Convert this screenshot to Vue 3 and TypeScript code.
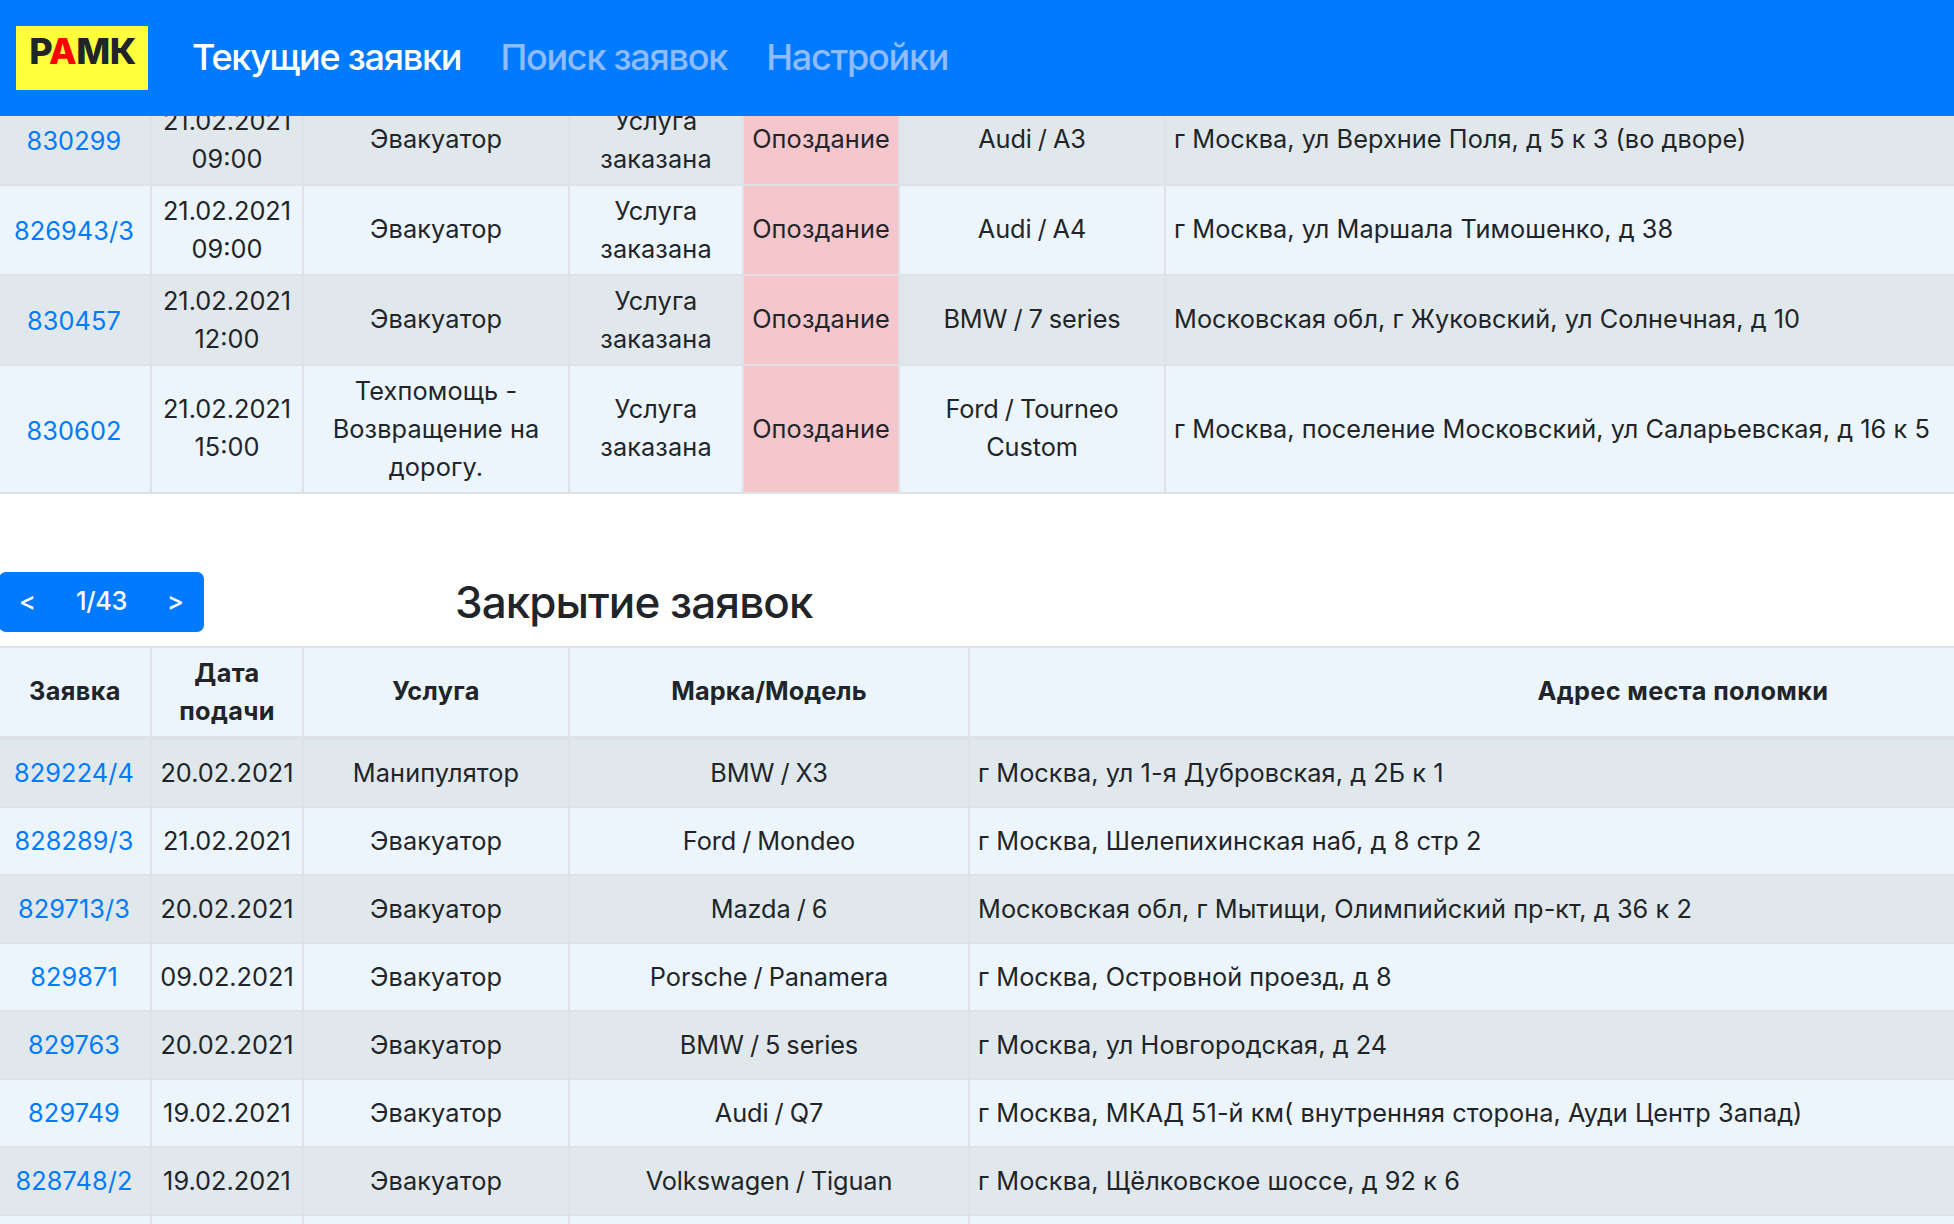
<script setup lang="ts">
interface ActiveRequest {
  id: string
  date: string
  time: string
  service: string[]
  car: string[]
  address: string
}

interface ClosingRequest {
  id: string
  date: string
  service: string
  car: string
  address: string
}

const activeRequests: ActiveRequest[] = [
  { id: '830299', date: '21.02.2021', time: '09:00', service: ['Эвакуатор'], car: ['Audi / A3'], address: 'г Москва, ул Верхние Поля, д 5 к 3 (во дворе)' },
  { id: '826943/3', date: '21.02.2021', time: '09:00', service: ['Эвакуатор'], car: ['Audi / A4'], address: 'г Москва, ул Маршала Тимошенко, д 38' },
  { id: '830457', date: '21.02.2021', time: '12:00', service: ['Эвакуатор'], car: ['BMW / 7 series'], address: 'Московская обл, г Жуковский, ул Солнечная, д 10' },
  { id: '830602', date: '21.02.2021', time: '15:00', service: ['Техпомощь -', 'Возвращение на', 'дорогу.'], car: ['Ford / Tourneo', 'Custom'], address: 'г Москва, поселение Московский, ул Саларьевская, д 16 к 5' },
]

const closingRequests: ClosingRequest[] = [
  { id: '829224/4', date: '20.02.2021', service: 'Манипулятор', car: 'BMW / X3', address: 'г Москва, ул 1-я Дубровская, д 2Б к 1' },
  { id: '828289/3', date: '21.02.2021', service: 'Эвакуатор', car: 'Ford / Mondeo', address: 'г Москва, Шелепихинская наб, д 8 стр 2' },
  { id: '829713/3', date: '20.02.2021', service: 'Эвакуатор', car: 'Mazda / 6', address: 'Московская обл, г Мытищи, Олимпийский пр-кт, д 36 к 2' },
  { id: '829871', date: '09.02.2021', service: 'Эвакуатор', car: 'Porsche / Panamera', address: 'г Москва, Островной проезд, д 8' },
  { id: '829763', date: '20.02.2021', service: 'Эвакуатор', car: 'BMW / 5 series', address: 'г Москва, ул Новгородская, д 24' },
  { id: '829749', date: '19.02.2021', service: 'Эвакуатор', car: 'Audi / Q7', address: 'г Москва, МКАД 51-й км( внутренняя сторона, Ауди Центр Запад)' },
  { id: '828748/2', date: '19.02.2021', service: 'Эвакуатор', car: 'Volkswagen / Tiguan', address: 'г Москва, Щёлковское шоссе, д 92 к 6' },
]
</script>

<template>
  <div class="page">
    <header class="navbar">
      <a class="brand">Р<span class="brand-accent">А</span>МК</a>
      <nav class="nav">
        <a class="nav-link active">Текущие заявки</a>
        <a class="nav-link">Поиск заявок</a>
        <a class="nav-link">Настройки</a>
      </nav>
    </header>

    <main>
      <table class="grid active-grid">
        <colgroup>
          <col class="w-id" /><col class="w-date" /><col class="w-service" /><col class="w-status" /><col class="w-late" /><col class="w-car" /><col />
        </colgroup>
        <tbody>
          <tr v-for="r in activeRequests" :key="r.id" :class="{ tall: r.service.length > 1 }">
            <td class="id"><a>{{ r.id }}</a></td>
            <td class="double">{{ r.date }}<br />{{ r.time }}</td>
            <td class="single service"><div v-for="line in r.service" :key="line">{{ line }}</div></td>
            <td class="double service">Услуга<br />заказана</td>
            <td class="single late">Опоздание</td>
            <td class="car" :class="r.car.length > 1 ? 'double' : 'single'"><div v-for="line in r.car" :key="line">{{ line }}</div></td>
            <td class="single address">{{ r.address }}</td>
          </tr>
        </tbody>
      </table>

      <section class="toolbar">
        <div class="pager">
          <button>&lt;</button>
          <span>1/43</span>
          <button>&gt;</button>
        </div>
        <h2>Закрытие заявок</h2>
      </section>

      <table class="grid closing-grid">
        <colgroup>
          <col class="w-id" /><col class="w-date" /><col class="w-service" /><col class="w-model" /><col />
        </colgroup>
        <thead>
          <tr>
            <th class="single">Заявка</th>
            <th>Дата<br />подачи</th>
            <th class="single">Услуга</th>
            <th class="single model">Марка/Модель</th>
            <th class="single">Адрес места поломки</th>
          </tr>
        </thead>
        <tbody>
          <tr v-for="r in closingRequests" :key="r.id">
            <td class="id"><a>{{ r.id }}</a></td>
            <td>{{ r.date }}</td>
            <td class="service">{{ r.service }}</td>
            <td class="car">{{ r.car }}</td>
            <td class="address">{{ r.address }}</td>
          </tr>
          <tr><td></td><td></td><td></td><td></td><td></td></tr>
        </tbody>
      </table>
    </main>
  </div>
</template>

<style>
body {
  margin: 0;
  background: #fff;
}
</style>

<style scoped>
.page {
  height: 1224px;
  overflow: hidden;
  background: #fff;
  color: #212529;
  font: 400 25.3px/38px Inter, "Liberation Sans", sans-serif;
}

.navbar {
  position: relative;
  z-index: 1;
  display: flex;
  align-items: center;
  box-sizing: border-box;
  height: 116px;
  padding: 0 16px;
  background: #007bff;
}

.brand {
  box-sizing: border-box;
  width: 132px;
  height: 64px;
  padding-left: 1px;
  background: #ffff3b;
  font-size: 36px;
  font-weight: 800;
  letter-spacing: -0.5px;
  line-height: 50px;
  text-align: center;
  white-space: nowrap;
}

.brand-accent {
  color: #f00;
}

.nav {
  display: flex;
  gap: 39.4px;
  margin: -2px 0 0 44px;
}

.nav-link {
  color: #8fbcff;
  font-size: 36px;
  font-weight: 500;
  letter-spacing: -1.26px;
  line-height: 54px;
  white-space: nowrap;
}

.nav-link.active {
  color: #fff;
}

main {
  margin-top: -20px;
}

.grid {
  width: 2398px;
  table-layout: fixed;
  border-collapse: separate;
  border-spacing: 0;
  background: #edf5fc;
}

.w-id,
.w-date {
  width: 152px;
}

.w-service,
.w-car {
  width: 266px;
}

.w-status {
  width: 174px;
}

.w-late {
  width: 156px;
}

.w-model {
  width: 400px;
}

.grid td,
.grid th {
  box-sizing: border-box;
  padding: 6px 0;
  border-right: 2px solid #dee2e6;
  border-bottom: 2px solid #dee2e6;
  text-align: center;
  vertical-align: middle;
  white-space: nowrap;
}

.grid tbody tr:nth-child(odd) td {
  background: #e1e8eb;
}

.grid tbody tr td.late {
  background: #f5c6cb;
}

.grid .id {
  padding-right: 2px;
  letter-spacing: 0.12px;
}

.grid .service,
.grid .late {
  letter-spacing: 0.12px;
}

.active-grid .id {
  padding-top: 8px;
}

.active-grid .tall .id {
  padding-top: 10px;
}

.active-grid tr:not(.tall) .single,
.active-grid .tall .double,
.closing-grid th.single {
  padding-bottom: 8px;
}

.id a {
  color: #007bff;
}

.grid .car {
  word-spacing: -1px;
  letter-spacing: -0.08px;
}

.grid td.address {
  padding-left: 8px;
  letter-spacing: 0.05px;
  text-align: left;
}

.toolbar {
  display: flex;
  align-items: center;
  height: 60px;
  padding: 78px 0 14px;
}

.pager {
  display: flex;
  align-items: center;
  justify-content: space-between;
  box-sizing: border-box;
  width: 205px;
  height: 60px;
  margin-left: -1px;
  padding: 0 20px;
  border-radius: 7px;
  background: #007bff;
  color: #fff;
  font-weight: 500;
  letter-spacing: -0.3px;
  line-height: 36px;
}

.pager span {
  padding-bottom: 2px;
}

.pager button {
  padding: 0 0 2px;
  border: 0;
  background: none;
  color: inherit;
  font: inherit;
}

h2 {
  margin: 0 0 0 251px;
  font-size: 44px;
  font-weight: 500;
  letter-spacing: -0.92px;
  line-height: 60px;
  white-space: nowrap;
}

.closing-grid th {
  border-top: 2px solid #dee2e6;
  border-bottom-width: 4px;
  font-weight: 700;
  letter-spacing: 0.35px;
}

.closing-grid th.model {
  letter-spacing: 0.05px;
}

.closing-grid td {
  height: 68px;
}
</style>
